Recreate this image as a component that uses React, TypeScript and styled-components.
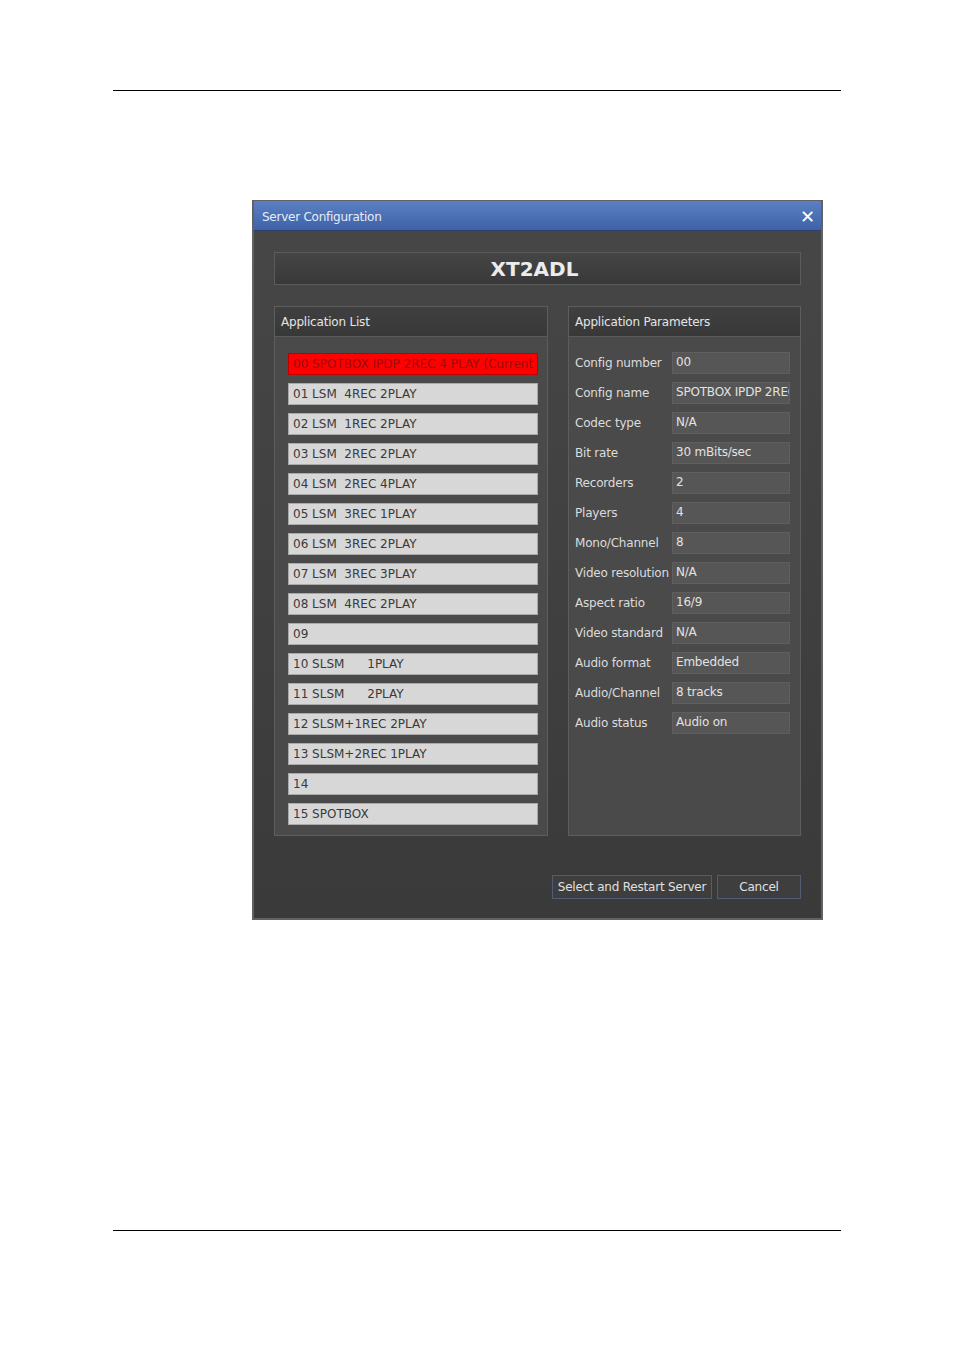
import React from "react";
import styled, { createGlobalStyle } from "styled-components";

const Global = createGlobalStyle`
  html, body { margin: 0; padding: 0; background: #ffffff; }
  body { font-family: "DejaVu Sans", "Liberation Sans", Arial, sans-serif; }
`;

const Page = styled.div`
  width: 954px;
  height: 1349px;
  box-sizing: border-box;
  padding-top: 90px;
  display: flex;
  flex-direction: column;
`;

const Rule = styled.div<{ $top: number }>`
  margin-left: 113px;
  width: 728px;
  height: 1px;
  background: #000;
  margin-top: ${(p) => p.$top}px;
`;

const Dialog = styled.div`
  margin-top: 109px;
  margin-left: 252px;
  width: 571px;
  height: 720px;
  box-sizing: border-box;
  border: 2px solid #626262;
  border-top-width: 1px;
  display: flex;
  flex-direction: column;
  background: linear-gradient(#474747, #3a3a3a);
`;

const TitleBar = styled.div`
  height: 30px;
  flex: none;
  display: flex;
  align-items: center;
  justify-content: space-between;
  padding: 2px 6px 0 8px;
  box-sizing: border-box;
  background: linear-gradient(#5b80c2, #3e62a9);
  border-bottom: 1px solid #2e3f60;
`;

const Title = styled.span`
  font-family: "DejaVu Sans", sans-serif;
  font-size: 12px;
  letter-spacing: -0.25px;
  color: #e6ecf7;
`;

const Close = styled.span`
  font-family: "DejaVu Sans", sans-serif;
  font-weight: bold;
  color: #ffffff;
  font-size: 18px;
  line-height: 1;
`;

const Body = styled.div`
  flex: 1;
  display: flex;
  flex-direction: column;
  padding: 21px 20px 0 20px;
`;

const Header = styled.div`
  height: 33px;
  box-sizing: border-box;
  border: 1px solid #5b5b5b;
  background: linear-gradient(#454545, #393939);
  display: flex;
  align-items: center;
  justify-content: center;
  padding-right: 6px;
  font-family: "DejaVu Sans", sans-serif;
  font-weight: bold;
  font-size: 20px;
  letter-spacing: 0px;
  color: #ececec;
`;

const Panels = styled.div`
  margin-top: 21px;
  display: flex;
  gap: 20px;
  height: 530px;
`;

const Panel = styled.div<{ $w: number }>`
  width: ${(p) => p.$w}px;
  box-sizing: border-box;
  border: 1px solid #5d5d5d;
  background: #4a4a4a;
  display: flex;
  flex-direction: column;
`;

const PanelHead = styled.div`
  height: 30px;
  box-sizing: border-box;
  border-bottom: 1px solid #5a5a5a;
  background: linear-gradient(#404040, #383838);
  display: flex;
  align-items: center;
  padding-left: 6px;
  font-family: "DejaVu Sans", sans-serif;
  font-size: 12px;
  letter-spacing: -0.2px;
  color: #e4e4e4;
`;

const List = styled.div`
  display: flex;
  flex-direction: column;
  gap: 8px;
  padding: 16px 9px 0 13px;
`;

const Item = styled.div<{ $current?: boolean }>`
  height: 22px;
  box-sizing: border-box;
  border: 1px solid ${(p) => (p.$current ? "#c00000" : "#a9a9a9")};
  background: ${(p) => (p.$current ? "#ff0000" : "#d7d7d7")};
  color: ${(p) => (p.$current ? "#980c0c" : "#3a3a3a")};
  font-family: "DejaVu Sans", sans-serif;
  font-size: 12px;
  letter-spacing: 0px;
  line-height: 20px;
  padding-left: 4px;
  white-space: pre;
  overflow: hidden;
`;

const Params = styled.div`
  display: flex;
  flex-direction: column;
  gap: 8px;
  padding: 15px 10px 0 6px;
`;

const ParamRow = styled.div`
  display: flex;
  align-items: center;
  height: 22px;
`;

const Label = styled.span`
  width: 97px;
  flex: none;
  font-family: "DejaVu Sans", sans-serif;
  font-size: 12px;
  letter-spacing: -0.2px;
  color: #dcdcdc;
  white-space: nowrap;
`;

const Value = styled.div`
  flex: 1;
  height: 22px;
  box-sizing: border-box;
  border: 1px solid #5f5f5f;
  background: #565656;
  color: #e2e2e2;
  font-family: "DejaVu Sans", sans-serif;
  font-size: 12px;
  letter-spacing: -0.2px;
  line-height: 18px;
  padding-left: 3px;
  white-space: pre;
  overflow: hidden;
`;

const Buttons = styled.div`
  margin-top: 39px;
  display: flex;
  justify-content: flex-end;
  gap: 5px;
`;

const Button = styled.div<{ $w: number }>`
  width: ${(p) => p.$w}px;
  height: 24px;
  box-sizing: border-box;
  border: 1px solid #505c72;
  background: #3e3e3e;
  color: #e0e0e0;
  font-family: "DejaVu Sans", sans-serif;
  font-size: 12px;
  letter-spacing: -0.2px;
  display: flex;
  align-items: center;
  justify-content: center;
`;

const items = [
  "00 SPOTBOX IPDP 2REC 4 PLAY (Current",
  "01 LSM  4REC 2PLAY",
  "02 LSM  1REC 2PLAY",
  "03 LSM  2REC 2PLAY",
  "04 LSM  2REC 4PLAY",
  "05 LSM  3REC 1PLAY",
  "06 LSM  3REC 2PLAY",
  "07 LSM  3REC 3PLAY",
  "08 LSM  4REC 2PLAY",
  "09",
  "10 SLSM      1PLAY",
  "11 SLSM      2PLAY",
  "12 SLSM+1REC 2PLAY",
  "13 SLSM+2REC 1PLAY",
  "14",
  "15 SPOTBOX",
];

const params: [string, string][] = [
  ["Config number", "00"],
  ["Config name", "SPOTBOX IPDP 2REC 4 PLAY"],
  ["Codec type", "N/A"],
  ["Bit rate", "30 mBits/sec"],
  ["Recorders", "2"],
  ["Players", "4"],
  ["Mono/Channel", "8"],
  ["Video resolution", "N/A"],
  ["Aspect ratio", "16/9"],
  ["Video standard", "N/A"],
  ["Audio format", "Embedded"],
  ["Audio/Channel", "8 tracks"],
  ["Audio status", "Audio on"],
];

export default function App() {
  return (
    <Page>
      <Global />
      <Rule $top={0} />
      <Dialog>
        <TitleBar>
          <Title>Server Configuration</Title>
          <Close>✕</Close>
        </TitleBar>
        <Body>
          <Header>XT2ADL</Header>
          <Panels>
            <Panel $w={275}>
              <PanelHead>Application List</PanelHead>
              <List>
                {items.map((t, i) => (
                  <Item key={i} $current={i === 0}>
                    {t}
                  </Item>
                ))}
              </List>
            </Panel>
            <Panel $w={233}>
              <PanelHead>Application Parameters</PanelHead>
              <Params>
                {params.map(([l, v]) => (
                  <ParamRow key={l}>
                    <Label>{l}</Label>
                    <Value>{v}</Value>
                  </ParamRow>
                ))}
              </Params>
            </Panel>
          </Panels>
          <Buttons>
            <Button $w={160}>Select and Restart Server</Button>
            <Button $w={84}>Cancel</Button>
          </Buttons>
        </Body>
      </Dialog>
      <Rule $top={310} />
    </Page>
  );
}
